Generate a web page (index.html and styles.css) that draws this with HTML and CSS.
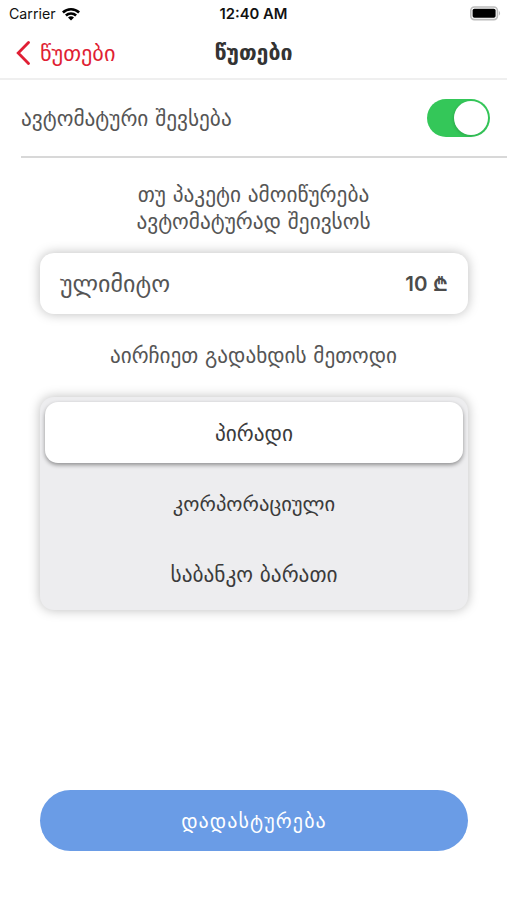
FILE: index.html
```html
<!DOCTYPE html>
<html lang="ka">
<head>
<meta charset="utf-8">
<title>წუთები</title>
<link rel="stylesheet" href="styles.css">
</head>
<body>
<div class="status">
  <div class="carrier"><span>Carrier</span>
    <svg width="18" height="14" viewBox="0 0 18 14"><path d="M0 4.5A13 13 0 0 1 18 4.5L16.2 6.4A10.4 10.4 0 0 0 1.8 6.4ZM3 7.6A8.8 8.8 0 0 1 15 7.6L13.2 9.4A6.2 6.2 0 0 0 4.8 9.4ZM6 10.6A4.5 4.5 0 0 1 12 10.6L9 13.6Z"/></svg>
  </div>
  <div class="time">12:40 AM</div>
  <svg class="battery" width="33" height="15" viewBox="0 0 33 15"><rect x="1.8" y="1" width="26.6" height="12.6" rx="3.5" fill="none" stroke="#bcbcbc" stroke-width="1.6"/><rect x="3.6" y="2.8" width="23" height="9" rx="1.8"/><path d="M29.9 4.8Q32.4 7.3 29.9 9.8Z" fill="#bcbcbc"/></svg>
</div>
<header class="nav">
  <div class="back"><svg width="16" height="24" viewBox="0 0 16 24"><path d="M13.5 1.5L3.2 12L13.5 22.5" fill="none" stroke="#e01f34" stroke-width="2.8" stroke-linecap="round"/></svg><span>წუთები</span></div>
  <h1>წუთები</h1>
</header>
<main>
  <div class="row"><span>ავტომატური შევსება</span><span class="toggle"><i class="knob"></i></span></div>
  <p class="hint">თუ პაკეტი ამოიწურება<br>ავტომატურად შეივსოს</p>
  <div class="card"><span class="name">ულიმიტო</span><span class="price">10 ₾</span></div>
  <p class="method">აირჩიეთ გადახდის მეთოდი</p>
  <div class="options">
    <div class="option selected">პირადი</div>
    <div class="option corporate">კორპორაციული</div>
    <div class="option">საბანკო ბარათი</div>
  </div>
</main>
<button class="confirm">დადასტურება</button>
</body>
</html>
```

FILE: styles.css
```css
* { box-sizing: border-box; }
body { margin: 0; height: 900px; background: #fff; color: #555; font-family: "DejaVu Sans", sans-serif; font-size: 21.3px; display: flex; flex-direction: column; }
.status { height: 27px; display: grid; grid-template-columns: 1fr 1fr 1fr; align-items: center; padding: 0 5px 0 9px; font: 14.2px Inter, sans-serif; color: #111; flex: none; }
.carrier { display: flex; align-items: center; gap: 6px; }
.time { text-align: center; font-size: 14.8px; font-weight: 600; margin-left: -4px; }
.battery { justify-self: end; }
.nav { height: 53px; flex: none; display: grid; grid-template-columns: 1fr 1fr 1fr; align-items: center; padding: 0 15px; border-bottom: 2px solid #efefef; }
.back { display: flex; align-items: center; gap: 9px; color: #e01f34; font-size: 22.3px; line-height: 24px; }
h1 { margin: 0; text-align: center; font-size: 21.4px; line-height: 25px; color: #333; }
.row { height: 78px; margin-left: 21px; padding-right: 17px; border-bottom: 2px solid #d8d8d8; display: flex; justify-content: space-between; align-items: center; }
.toggle { width: 63px; height: 38px; border-radius: 19px; background: #34c759; padding: 2px; display: flex; justify-content: flex-end; }
.knob { width: 34px; height: 34px; border-radius: 50%; background: #fff; box-shadow: -1px 1px 3px #0002; }
p { margin: 0; text-align: center; line-height: 27px; }
.hint { margin-top: 23px; }
.card { margin: 18px 39px 0 40px; height: 61px; border-radius: 14px; box-shadow: 0 0 12px #0004; display: flex; align-items: center; justify-content: space-between; padding: 0 20px; }
.name { font-size: 24px; }
.price { font: 600 20.5px Inter, "DejaVu Sans", sans-serif; color: #4b4b4b; }
.method { margin-top: 28px; font-size: 21.2px; }
.options { margin: 28px 39px 0 40px; height: 213px; border-radius: 14px; background: #ededef; box-shadow: 0 0 12px #0004; padding: 5px; }
.option { height: 71px; display: flex; align-items: center; justify-content: center; color: #3b3b3b; }
.selected { height: 61px; margin-bottom: 5px; padding-top: 2px; border-radius: 13px; background: #fff; box-shadow: 0 2px 4px #0006; }
.corporate { font-size: 20.6px; }
.confirm { margin: auto 39px 49px 40px; height: 61px; flex: none; border: 0; border-radius: 31px; background: #6a9ce6; color: #fff; font: 20px "DejaVu Sans", sans-serif; letter-spacing: 1.1px; text-transform: uppercase; }
```
